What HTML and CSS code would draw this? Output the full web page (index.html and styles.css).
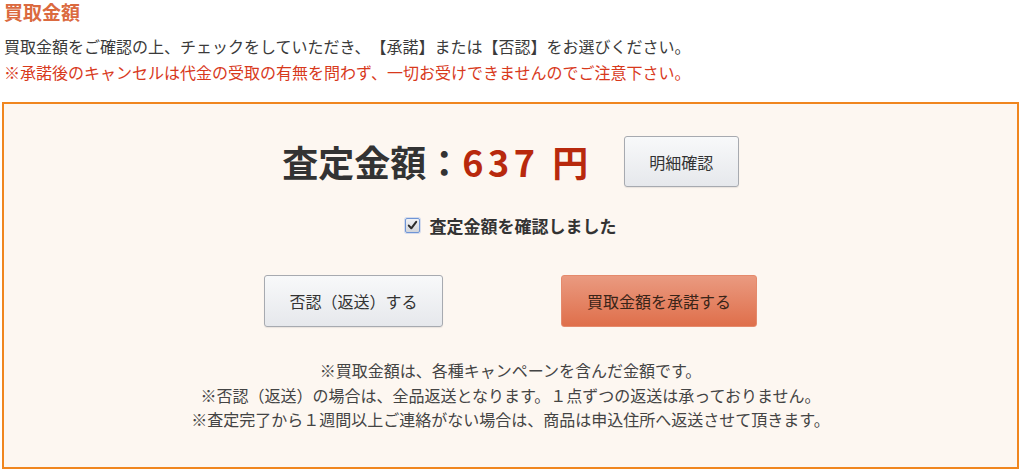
FILE: index.html
```html
<!DOCTYPE html>
<html lang="ja">
<head>
<meta charset="utf-8">
<title>買取金額</title>
<link rel="stylesheet" href="styles.css">
</head>
<body>
<div class="page">
  <h2 class="title">買取金額</h2>
  <p class="intro">買取金額をご確認の上、チェックをしていただき、【承諾】または【否認】をお選びください。<br><span class="warn">※承諾後のキャンセルは代金の受取の有無を問わず、一切お受けできませんのでご注意下さい。</span></p>
  <div class="box">
    <div class="amount-row">
      <div class="amount">査定金額：<span class="price">637 円</span></div>
      <button class="btn btn-gray btn-detail">明細確認</button>
    </div>
    <label class="check-row">
      <span class="checkbox"><svg viewBox="0 0 15 15" width="15" height="15"><path d="M3.8 7.6 L6.3 10.3 L11.2 3.8" fill="none" stroke="#2b2b2b" stroke-width="2" stroke-linecap="round" stroke-linejoin="round"/></svg></span>
      <span class="check-label">査定金額を確認しました</span>
    </label>
    <div class="action-row">
      <button class="btn btn-gray btn-reject">否認（返送）する</button>
      <button class="btn btn-orange btn-accept">買取金額を承諾する</button>
    </div>
    <div class="notes">
      <p>※買取金額は、各種キャンペーンを含んだ金額です。</p>
      <p>※否認（返送）の場合は、全品返送となります。１点ずつの返送は承っておりません。</p>
      <p>※査定完了から１週間以上ご連絡がない場合は、商品は申込住所へ返送させて頂きます。</p>
    </div>
  </div>
</div>
</body>
</html>
```
FILE: styles.css
```css
* { box-sizing: border-box; }
html, body { margin: 0; padding: 0; background: #ffffff; }
body {
  font-family: "Noto Sans CJK JP", "Noto Sans", sans-serif;
  color: #333333;
  text-spacing-trim: space-all;
}
.page {
  width: 1017px;
  margin-left: 2px;
}
.title {
  margin: 0;
  padding-left: 2px;
  font-size: 19px;
  line-height: 24px;
  font-weight: bold;
  color: #db6a3f;
}
.intro {
  margin: 9px 0 0 0;
  padding-left: 2px;
  font-size: 16px;
  line-height: 26px;
  color: #3a3a3a;
}
.warn { color: #d8391c; }
.box {
  margin-top: 17px;
  border: 2px solid #f0861f;
  background: #fdf7f1;
  padding: 32px 0 35px 0;
  display: flex;
  flex-direction: column;
  align-items: center;
}
.amount-row {
  display: flex;
  align-items: center;
  gap: 31px;
  height: 51px;
}
.amount {
  font-size: 36px;
  font-weight: bold;
  color: #333333;
  line-height: 51px;
}
.price {
  color: #b8290d;
  letter-spacing: 4.5px;
}
.btn {
  font-family: "Noto Sans CJK JP", "Noto Sans", sans-serif;
  font-size: 16px;
  border-radius: 3px;
  cursor: pointer;
  padding: 0;
  text-spacing-trim: space-all;
}
.btn-gray {
  border: 1px solid #a7aab0;
  background: linear-gradient(#f8f9fa, #e6e8ec);
  color: #333333;
  box-shadow: 0 1px 1px rgba(0,0,0,0.08);
}
.btn-orange {
  border: 1px solid #e58a6c;
  background: linear-gradient(#ea9a80, #df6f4b);
  color: #3a2418;
}
.btn-detail { width: 115px; height: 51px; }
.check-row {
  margin-top: 26px;
  display: flex;
  align-items: center;
  gap: 10px;
  height: 24px;
}
.checkbox {
  width: 15px;
  height: 15px;
  border: 1px solid #6f95d6;
  border-radius: 2px;
  background: linear-gradient(#f0f1f4, #d2d5db);
  box-shadow: 0 0 0 1px rgba(140,170,225,0.35);
  display: flex;
}
.checkbox svg { display: block; margin: -1px; }
.check-label {
  font-size: 17px;
  font-weight: bold;
  color: #333333;
}
.action-row {
  margin-top: 38px;
  display: flex;
  gap: 118px;
}
.btn-reject { width: 179px; height: 52px; }
.btn-accept { width: 196px; height: 52px; }
.notes {
  margin-top: 31px;
  text-align: center;
  font-size: 16px;
  line-height: 24.5px;
  color: #444444;
}
.notes p { margin: 0; }
```
